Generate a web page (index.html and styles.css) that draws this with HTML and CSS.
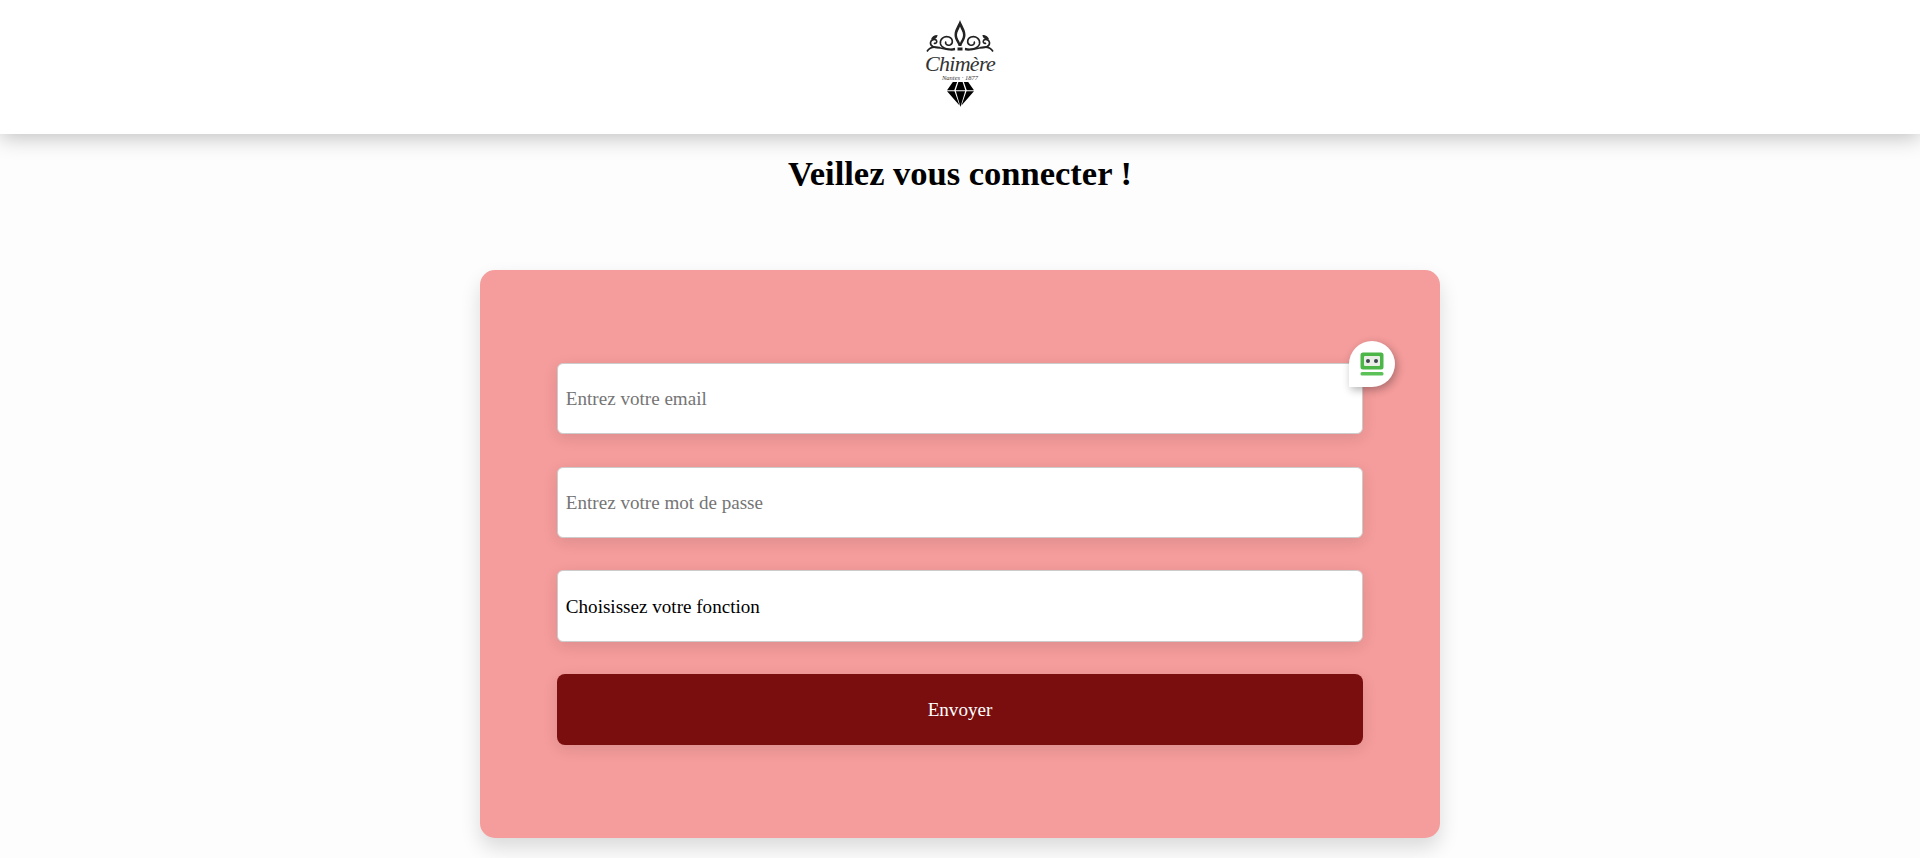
FILE: index.html
```html
<!DOCTYPE html>
<html lang="fr">
<head>
<meta charset="utf-8">
<title>Chimère</title>
<link rel="stylesheet" href="styles.css">
</head>
<body>
<header class="site-header">
  <div class="logo">
    <svg class="logo-orn" viewBox="0 0 68 33" width="68" height="33" aria-hidden="true">
      <path class="fill" d="M34 0C35.500 5 39.500 9 39.500 15C39.500 19.500 36.500 22 35.400 26H32.600C31.500 22 28.500 19.500 28.500 15C28.500 9 32.500 5 34 0ZM34 6.500C33 9.500 31 12 31 15C31 18 33 20.500 34 23C35 20.500 37 18 37 15C37 12 35 9.500 34 6.500Z"/>
      <rect class="fill" x="31.500" y="27.500" width="5" height="3"/>
      <g id="scroll-left">
        <path class="line" d="M29 28.500C24 30 16 29 14.500 24C13.500 19 18 15.500 23 17C27 18.500 27.500 23.500 24 25C21 26 18.500 23.500 20 21.500"/>
        <path class="line" d="M14 27.500C8 28 4 26 4.500 22.500C5 19.500 9 18.500 10.500 20.500C11.500 22.500 9.500 24 8 23"/>
        <path class="line" d="M1 31.500C3 28 7 26.500 12 27.500C17 28.500 24 31 29 29.500"/>
        <path class="fill" d="M5 19.500C5.500 17 8 15 11.500 15C11.500 18 8.500 20 5 19.500Z"/>
      </g>
      <use href="#scroll-left" transform="matrix(-1 0 0 1 68 0)"/>
    </svg>
    <div class="logo-name">Chimère</div>
    <div class="logo-sub">Nantes · 1877</div>
    <svg class="logo-gem" viewBox="0 0 28 26" width="27" height="25" aria-hidden="true">
      <path d="M6 0H10.500L7.500 8.500H0ZM11.800 0H16.200L19 8.500H9ZM17.500 0H22L28 8.500H20.500ZM0 9.500H7.800L13 24.500ZM9.200 9.500H18.800L14 26ZM20.200 9.500H28L15 24.500Z"/>
    </svg>
  </div>
</header>
<main class="page">
  <h1 class="title">Veillez vous connecter !</h1>
  <div class="card">
    <form class="form">
      <div class="field-wrap">
        <input class="field" type="email" placeholder="Entrez votre email">
        <span class="badge">
          <svg viewBox="0 0 24 24" width="24" height="24" aria-hidden="true">
            <rect class="bot-frame" x="0.500" y="0.500" width="23" height="17" rx="2.500"/>
            <rect class="bot-face" x="4" y="4" width="16" height="10" rx="1"/>
            <circle class="bot-eye" cx="8" cy="9" r="2"/>
            <circle class="bot-eye" cx="16" cy="9" r="2"/>
            <rect class="bot-bar" x="0.500" y="20" width="23" height="3.500" rx="1.500"/>
          </svg>
        </span>
      </div>
      <input class="field" type="password" placeholder="Entrez votre mot de passe">
      <div class="field select">Choisissez votre fonction</div>
      <button class="submit" type="button">Envoyer</button>
    </form>
  </div>
</main>
</body>
</html>
```
FILE: styles.css
```css
* { box-sizing: border-box; }
html, body { margin: 0; padding: 0; height: 100%; overflow: hidden; }
body {
  background: #fdfdfd;
  color: #000;
  font-family: "Liberation Serif", "Times New Roman", serif;
}
.site-header {
  position: relative;
  height: 134px;
  background: #fff;
  box-shadow: 0 4px 20px rgba(0, 0, 0, 0.24);
  display: flex;
  justify-content: center;
  align-items: flex-start;
  padding-top: 20px;
}
.logo {
  width: 68px;
  display: flex;
  flex-direction: column;
  align-items: center;
}
.logo-orn { display: block; }
.logo-orn .fill { fill: #222; fill-rule: evenodd; }
.logo-orn .line { fill: none; stroke: #222; stroke-width: 1.600; }
.logo-name {
  font-style: italic;
  font-size: 22px;
  line-height: 20px;
  letter-spacing: -0.7px;
  color: #333;
  margin-top: 1px;
  white-space: nowrap;
}
.logo-sub {
  font-style: italic;
  font-size: 6.500px;
  line-height: 7px;
  color: #333;
  white-space: nowrap;
}
.logo-gem { display: block; margin-top: 1px; fill: #000; }
.page { display: flex; flex-direction: column; align-items: center; }
.title {
  font-size: 34.500px;
  font-weight: 700;
  line-height: 41px;
  margin: 19px 0 0;
  text-align: center;
}
.card {
  width: 960px;
  height: 568px;
  margin-top: 76px;
  background: #f59c9c;
  border-radius: 15px;
  box-shadow: 0 10px 20px rgba(0, 0, 0, 0.14);
  padding: 93px 76.800px 0;
}
.form { display: flex; flex-direction: column; gap: 32.500px; }
.field-wrap { position: relative; }
.field {
  display: flex;
  align-items: center;
  width: 100%;
  height: 71px;
  padding: 1.500px 8px 0;
  border: 1px solid #ccc;
  border-radius: 6px;
  background: #fff;
  color: #000;
  font-family: inherit;
  font-size: 19.100px;
  box-shadow: 0 4px 15px rgba(0, 0, 0, 0.1);
  outline: none;
}
.field::placeholder { color: #757575; opacity: 1; }
.select { height: 71.500px; }
.submit {
  display: block;
  width: 100%;
  height: 71px;
  border: 0;
  border-radius: 8px;
  background: #7a0e0e;
  color: #fff;
  font-family: inherit;
  font-size: 19.100px;
  box-shadow: 0 4px 15px rgba(0, 0, 0, 0.1);
}
.badge {
  position: absolute;
  top: -22px;
  right: -32px;
  width: 46px;
  height: 46px;
  display: flex;
  align-items: center;
  justify-content: center;
  background: #fff;
  border-radius: 50% 50% 50% 0;
  box-shadow: 2px 3px 8px rgba(0, 0, 0, 0.3);
}
.bot-frame { fill: #4cb648; }
.bot-bar { fill: #5cc258; }
.bot-face { fill: #e9efe6; }
.bot-eye { fill: #3c4550; }
```
